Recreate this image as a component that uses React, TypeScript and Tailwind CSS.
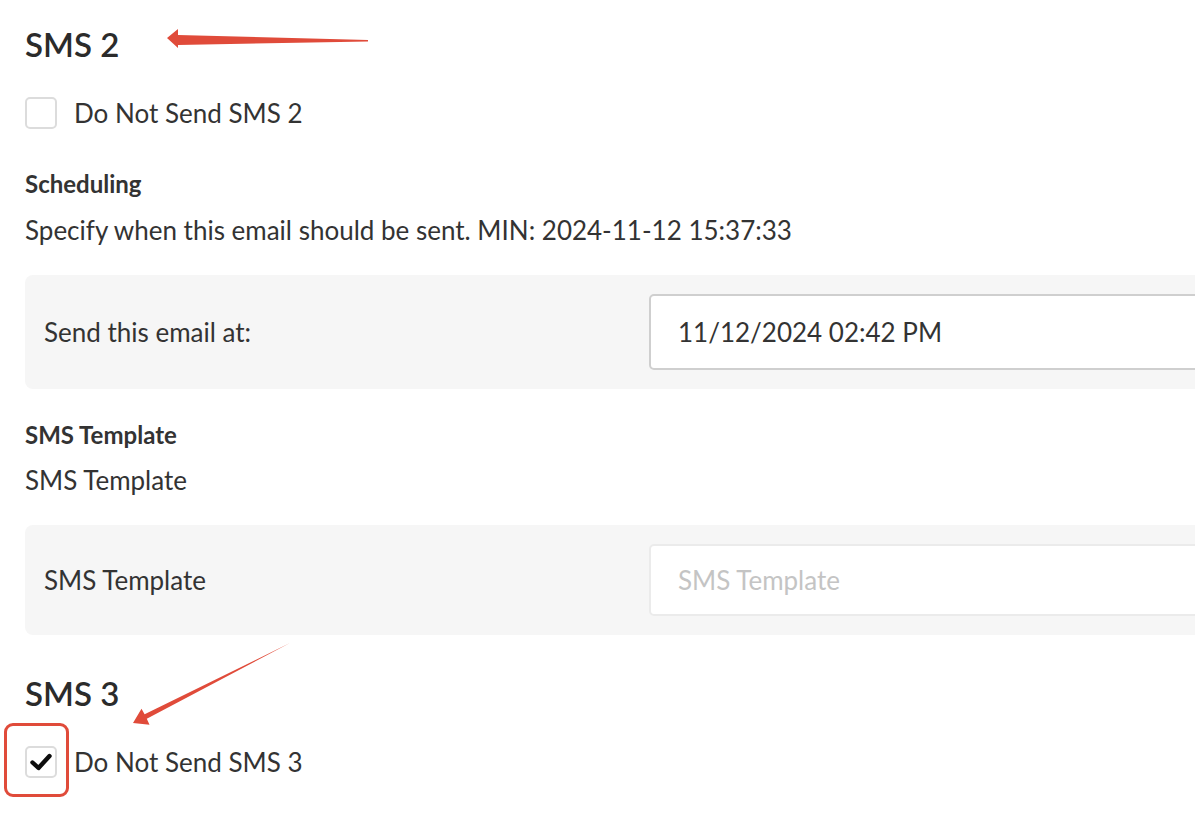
import React from 'react';

const font = { fontFamily: 'Lato, "Noto Sans", sans-serif' };

const Checkbox = ({ checked }: { checked?: boolean }) => (
  <span className="flex h-[32px] w-[32px] items-center justify-center rounded-[5px] border-2 border-[#dcdcdc] bg-white">
    {checked && (
      <svg width="24" height="24" viewBox="0 0 24 24">
        <path d="M3.5 12.5 L9.5 18 L20.5 6" fill="none" stroke="#0d0d0d" strokeWidth="4.4" strokeLinecap="round" strokeLinejoin="round" />
      </svg>
    )}
  </span>
);

const FieldPanel = ({ label, children, className }: { label: string; children: React.ReactNode; className?: string }) => (
  <div className={`flex items-center rounded-[8px] bg-[#f6f6f6] pl-[19px] ${className ?? ''}`}>
    <div className="w-[605px] text-[26px] text-[#333]">{label}</div>
    <div className="flex-1">{children}</div>
  </div>
);

export default function App() {
  return (
    <div className="relative h-[836px] w-[1195px] overflow-hidden bg-white text-[#333]" style={font}>
      <div className="w-[1240px] pl-[25px] pt-[22px]">
        <h2 className="text-[33px] font-semibold leading-[44px] text-[#2b2b2b]">SMS 2</h2>

        <label className="mt-[31px] flex items-center gap-[17px]">
          <Checkbox />
          <span className="text-[26px] leading-[31px] text-[#333]">Do Not Send SMS 2</span>
        </label>

        <div className="mt-[41px] text-[24px] font-bold leading-[28px] text-[#333]">Scheduling</div>
        <div className="mt-[16px] text-[26px] leading-[32px]">Specify when this email should be sent. MIN: 2024-11-12 15:37:33</div>

        <FieldPanel label="Send this email at:" className="mt-[29px] py-[19px]">
          <div className="flex h-[76px] items-center rounded-[5px] border-2 border-[#cfcfcf] bg-white pl-[27px] text-[26px] text-[#333]">
            11/12/2024 02:42 PM
          </div>
        </FieldPanel>

        <div className="mt-[32px] text-[24px] font-bold leading-[28px]">SMS Template</div>
        <div className="mt-[15px] text-[26px] leading-[32px]">SMS Template</div>

        <FieldPanel label="SMS Template" className="mt-[29px] py-[19px]">
          <div className="flex h-[72px] items-center rounded-[5px] border-2 border-[#ebebeb] bg-white pl-[27px] text-[26px] text-[#c4c4c4]">
            SMS Template
          </div>
        </FieldPanel>

        <h2 className="mt-[36px] text-[33px] font-semibold leading-[44px] text-[#2b2b2b]">SMS 3</h2>

        <label className="mt-[31px] flex items-center gap-[17px]">
          <Checkbox checked />
          <span className="text-[26px] leading-[31px] text-[#333]">Do Not Send SMS 3</span>
        </label>
      </div>

      {/* annotations */}
      <div className="pointer-events-none absolute left-[4px] top-[723px] h-[74px] w-[65px] rounded-[9px] border-[3px] border-[#e04b3a]" />
      <svg className="pointer-events-none absolute left-0 top-0" width="1195" height="836">
        <polygon points="167,38 178,29 178,35 368,40 368,41.5 178,45 178,48" fill="#e04b3a" />
        <polygon points="133,723 141.5,708.7 144.6,714.2 290,643 146.8,718.8 149.5,724.7" fill="#e04b3a" />
      </svg>
    </div>
  );
}
